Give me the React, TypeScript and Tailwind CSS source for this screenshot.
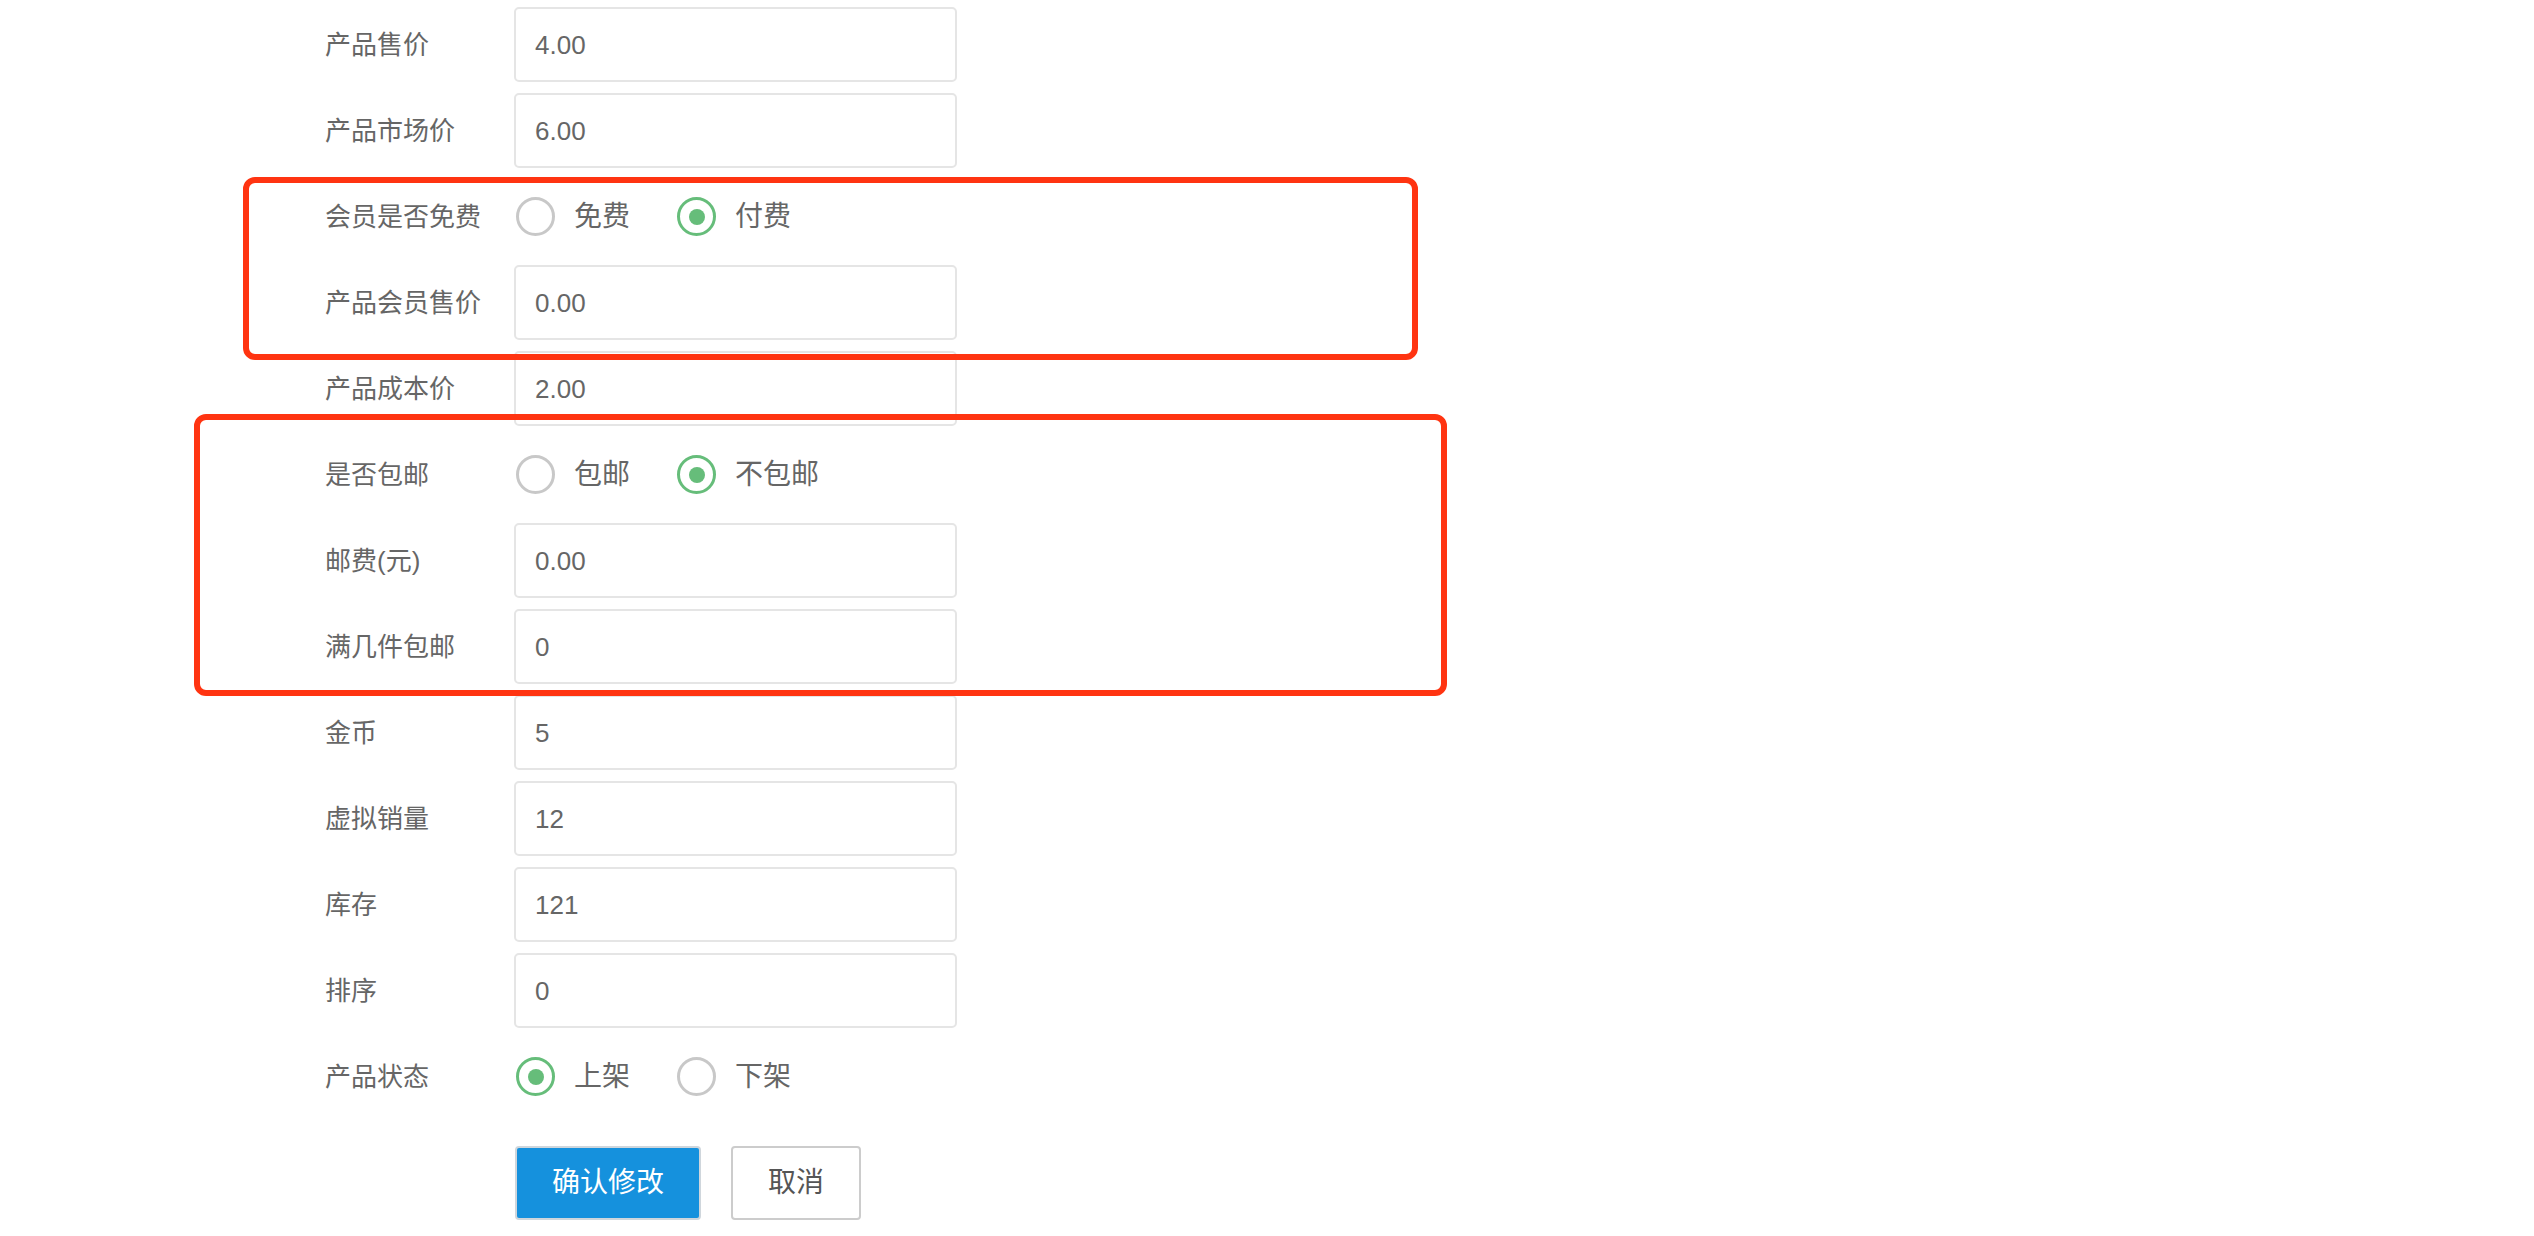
import React from "react";

type Row =
  | { kind: "input"; label: string; value: string }
  | { kind: "radio"; label: string; options: string[]; checked: number };

const rows: Row[] = [
  { kind: "input", label: "产品售价", value: "4.00" },
  { kind: "input", label: "产品市场价", value: "6.00" },
  { kind: "radio", label: "会员是否免费", options: ["免费", "付费"], checked: 1 },
  { kind: "input", label: "产品会员售价", value: "0.00" },
  { kind: "input", label: "产品成本价", value: "2.00" },
  { kind: "radio", label: "是否包邮", options: ["包邮", "不包邮"], checked: 1 },
  { kind: "input", label: "邮费(元)", value: "0.00" },
  { kind: "input", label: "满几件包邮", value: "0" },
  { kind: "input", label: "金币", value: "5" },
  { kind: "input", label: "虚拟销量", value: "12" },
  { kind: "input", label: "库存", value: "121" },
  { kind: "input", label: "排序", value: "0" },
  { kind: "radio", label: "产品状态", options: ["上架", "下架"], checked: 0 },
];

function Radio({ on }: { on: boolean }) {
  return on ? (
    <span className="flex h-[39px] w-[39px] shrink-0 items-center justify-center rounded-full border-[3px] border-[#66bd7a] bg-white">
      <span className="h-[16px] w-[16px] rounded-full bg-[#66bd7a]" />
    </span>
  ) : (
    <span className="h-[39px] w-[39px] shrink-0 rounded-full border-[3px] border-[#c8c8c8] bg-white" />
  );
}

export default function App() {
  return (
    <div
      className="relative h-[1236px] w-full overflow-hidden bg-white text-[26px] text-[#666666]"
      style={{ fontFamily: '"Liberation Sans", "Noto Sans CJK SC", sans-serif' }}
    >
      <div className="pl-[325px] pt-[7px]">
        {rows.map((r, i) => (
          <div key={i} className="mb-[11px] flex h-[75px] items-center">
            <div className="w-[189px] shrink-0 leading-none">{r.label}</div>
            {r.kind === "input" ? (
              <div className="flex h-[75px] w-[443px] items-center rounded-[5px] border-2 border-[#e5e5e5] bg-white pl-[19px] leading-none">
                {r.value}
              </div>
            ) : (
              <div className="flex items-center pl-[2px]">
                {r.options.map((o, j) => (
                  <label key={j} className="flex items-center">
                    <Radio on={j === r.checked} />
                    <span className="ml-[19px] mr-[47px] text-[28px] leading-none">{o}</span>
                  </label>
                ))}
              </div>
            )}
          </div>
        ))}
        <div className="ml-[190px] mt-[32px] flex gap-[30px]">
          <button className="flex h-[74px] w-[186px] items-center justify-center rounded-[4px] border-2 border-[#cfd6dc] bg-[#1591dd] text-[28px] leading-none text-white">
            确认修改
          </button>
          <button className="flex h-[74px] w-[130px] items-center justify-center rounded-[4px] border-2 border-[#cccccc] bg-white text-[28px] leading-none text-[#555555]">
            取消
          </button>
        </div>
      </div>

      <div className="pointer-events-none absolute left-[243px] top-[177px] h-[183px] w-[1175px] rounded-[12px] border-[6px] border-[#ff3411]" />
      <div className="pointer-events-none absolute left-[194px] top-[414px] h-[282px] w-[1253px] rounded-[12px] border-[6px] border-[#ff3411]" />
    </div>
  );
}
